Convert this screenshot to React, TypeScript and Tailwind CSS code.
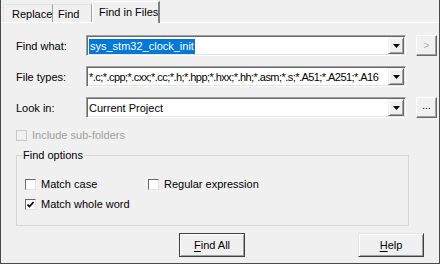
import React from 'react';

const FONT = { fontFamily: '"Liberation Sans", Arial, sans-serif' };

function DropButton() {
  return (
    <div className="w-[16px] h-[17px] my-[1px] mr-[1px] flex items-center justify-center bg-[#f0f0f0] border border-t-[#f0f0f0] border-l-[#f0f0f0] border-b-[#696969] border-r-[#696969] shadow-[inset_1px_1px_0_#ffffff,inset_-1px_-1px_0_#a0a0a0]">
      <svg width="7" height="4" viewBox="0 0 7 4">
        <path d="M0 0H7L3.5 4Z" fill="#000" />
      </svg>
    </div>
  );
}

function Combo({ children }: { children: React.ReactNode }) {
  return (
    <div className="w-[320px] h-[21px] flex items-stretch bg-white border border-t-[#a0a0a0] border-l-[#a0a0a0] border-b-white border-r-white shadow-[inset_1px_1px_0_#696969,inset_-1px_-1px_0_#e3e3e3]">
      <div className="flex-1 min-w-0 overflow-hidden whitespace-nowrap flex items-center pl-[2px] pt-[1px]">{children}</div>
      <DropButton />
    </div>
  );
}

function SmallButton({ children, dim }: { children: React.ReactNode; dim?: boolean }) {
  return (
    <div className={`w-[21px] h-[21px] ml-[10px] flex items-center justify-center text-[10px] border border-t-[#ffffff] border-l-[#ffffff] border-b-[#696969] border-r-[#696969] shadow-[inset_-1px_-1px_0_#a0a0a0] ${dim ? 'text-[#b0b0b0]' : 'text-[#000]'}`}>
      {children}
    </div>
  );
}

function Check({ checked, disabled }: { checked?: boolean; disabled?: boolean }) {
  return (
    <div className={`w-[11px] h-[11px] flex items-center justify-center border ${disabled ? 'border-[#c8c8c8] bg-[#f0f0f0]' : 'border-t-[#696969] border-l-[#696969] border-b-[#e3e3e3] border-r-[#e3e3e3] bg-white'}`}>
      {checked && (
        <svg width="7" height="7" viewBox="0 0 7 7">
          <path d="M0.5 3.5L2.5 5.5L6.5 1" stroke="#000" strokeWidth="1.6" fill="none" />
        </svg>
      )}
    </div>
  );
}

function PushButton({ label, rest, isDefault }: { label: string; rest: string; isDefault?: boolean }) {
  return (
    <div className={`w-[66px] h-[24px] flex items-center justify-center bg-[#f0f0f0] border ${isDefault ? 'border-[#404040]' : 'border-t-[#e3e3e3] border-l-[#e3e3e3] border-b-[#404040] border-r-[#404040]'} shadow-[inset_1px_1px_0_#ffffff,inset_-1px_-1px_0_#a0a0a0]`}>
      <span className="underline underline-offset-2">{label}</span>
      <span>{rest}</span>
    </div>
  );
}

export default function App() {
  return (
    <div style={FONT} className="w-[440px] h-[264px] bg-[#f0f0f0] text-[#000] text-[11px] leading-[14px] border-l border-r border-b border-[#4a4a4a] overflow-hidden">
      <div className="h-[23px] flex items-end pl-[2px] border-b border-[#ffffff] whitespace-nowrap">
        <div className="w-[50px] h-[18px] flex items-center pl-[8px] pt-[1px] border-t border-l border-[#e3e3e3] border-r-[#a0a0a0] border-r">Replace</div>
        <div className="w-[39px] h-[18px] flex items-center pl-[5px] pt-[1px] border-t border-[#e3e3e3] border-r border-r-[#a0a0a0]">Find</div>
        <div className="w-[68px] h-[22px] -mb-[1px] flex items-center pl-[6px] pb-[2px] bg-[#f0f0f0] border-t border-l border-[#ffffff] border-r-2 border-r-[#808080]">Find in Files</div>
      </div>

      <div className="pl-[15px] pt-[12px]">
        <div className="flex items-center">
          <span className="w-[70px]">Find what:</span>
          <Combo>
            <span className="bg-[#0078d7] text-white leading-[15px] px-[1px]">sys_stm32_clock_init</span>
          </Combo>
          <SmallButton dim>&gt;</SmallButton>
        </div>

        <div className="flex items-center mt-[10px]">
          <span className="w-[70px]">File types:</span>
          <Combo>
            <span className="tracking-[-0.55px]">*.c;*.cpp;*.cxx;*.cc;*.h;*.hpp;*.hxx;*.hh;*.asm;*.s;*.A51;*.A251;*.A16</span>
          </Combo>
          <div className="w-[21px] ml-[10px]" />
        </div>

        <div className="flex items-center mt-[10px]">
          <span className="w-[70px]">Look in:</span>
          <Combo>
            <span>Current Project</span>
          </Combo>
          <SmallButton>
            <span className="-mt-[4px]">...</span>
          </SmallButton>
        </div>

        <div className="flex items-center mt-[10px] gap-[5px] text-[#a0a0a0]">
          <Check disabled />
          <span>Include sub-folders</span>
        </div>

        <div className="relative mt-[13px] w-[393px] h-[71px] border border-[#d5d5d5]">
          <span className="absolute -top-[8px] left-[5px] px-[1px] bg-[#f0f0f0]">Find options</span>
          <div className="pl-[8px] pt-[21px] flex flex-col gap-[6px]">
            <div className="flex items-center">
              <div className="w-[123px] flex items-center gap-[5px]">
                <Check />
                <span>Match case</span>
              </div>
              <div className="flex items-center gap-[5px]">
                <Check />
                <span>Regular expression</span>
              </div>
            </div>
            <div className="flex items-center gap-[5px]">
              <Check checked />
              <span>Match whole word</span>
            </div>
          </div>
        </div>

        <div className="flex mt-[7px]">
          <div className="ml-[163px]">
            <PushButton label="F" rest="ind All" isDefault />
          </div>
          <div className="ml-[113px]">
            <PushButton label="H" rest="elp" />
          </div>
        </div>
      </div>
    </div>
  );
}
